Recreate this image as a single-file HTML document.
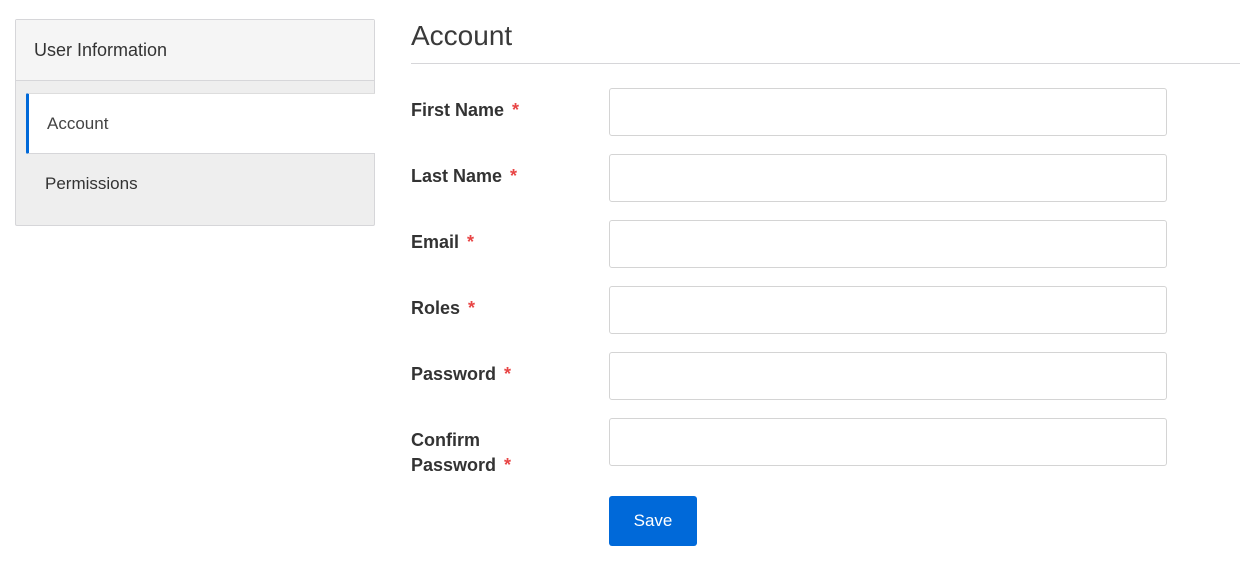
<!DOCTYPE html>
<html><head><style>
*{box-sizing:border-box;margin:0;padding:0}
body{width:1240px;height:568px;background:#fff;font-family:"Liberation Sans",sans-serif;position:relative;overflow:hidden;color:#333}
.a{position:absolute}
.panel{left:15px;top:19px;width:360px;height:207px;border:1px solid #d6d6d9;background:#eee;border-radius:2px}
.hdr{left:0;top:0;width:358px;height:61px;background:#f5f5f5;border-bottom:1px solid #d6d6d9;font-size:18px;padding:20px 0 0 18px;color:#333}
.act{left:10px;top:73px;width:349px;height:61px;background:#fff;border-left:3px solid #0069d9;border-top:1px solid #ddd;border-bottom:1px solid #d6d6d9;border-radius:2px 0 0 2px;font-size:17px;padding:20px 0 0 18px;color:#444}
.arrow{left:359px;top:73px;width:0;height:0;border-top:30px solid transparent;border-bottom:30px solid transparent;border-left:17px solid #fff}
.perm{left:29px;top:154px;font-size:17px;color:#333}
h1{position:absolute;left:411px;top:20px;font-weight:normal;font-size:28px;color:#3a3a3a}
.line{left:411px;top:63px;width:829px;height:1px;background:#d6d6d9}
.lbl{left:411px;font-weight:bold;font-size:18px;color:#333;line-height:25px}
.lbl span{color:#e84545;margin-left:3px}
.in{left:609px;width:558px;height:48px;border:1px solid #d4d4d4;border-radius:3px;background:#fff}
.btn{left:609px;top:496px;width:88px;height:50px;background:#0069d9;border-radius:3px;color:#fff;font-size:17px;text-align:center;line-height:50px}
</style></head><body>
<div class="a panel">
<div class="a hdr">User Information</div>
<div class="a act">Account</div>
<div class="a arrow"></div>
<div class="a perm">Permissions</div>
</div>
<h1>Account</h1>
<div class="a line"></div>
<div class="a lbl" style="top:98px">First Name <span>*</span></div>
<div class="a in" style="top:88px"></div>
<div class="a lbl" style="top:164px">Last Name <span>*</span></div>
<div class="a in" style="top:154px"></div>
<div class="a lbl" style="top:230px">Email <span>*</span></div>
<div class="a in" style="top:220px"></div>
<div class="a lbl" style="top:296px">Roles <span>*</span></div>
<div class="a in" style="top:286px"></div>
<div class="a lbl" style="top:362px">Password <span>*</span></div>
<div class="a in" style="top:352px"></div>
<div class="a lbl" style="top:428px">Confirm<br>Password <span>*</span></div>
<div class="a in" style="top:418px"></div>
<div class="a btn">Save</div>
</body></html>
